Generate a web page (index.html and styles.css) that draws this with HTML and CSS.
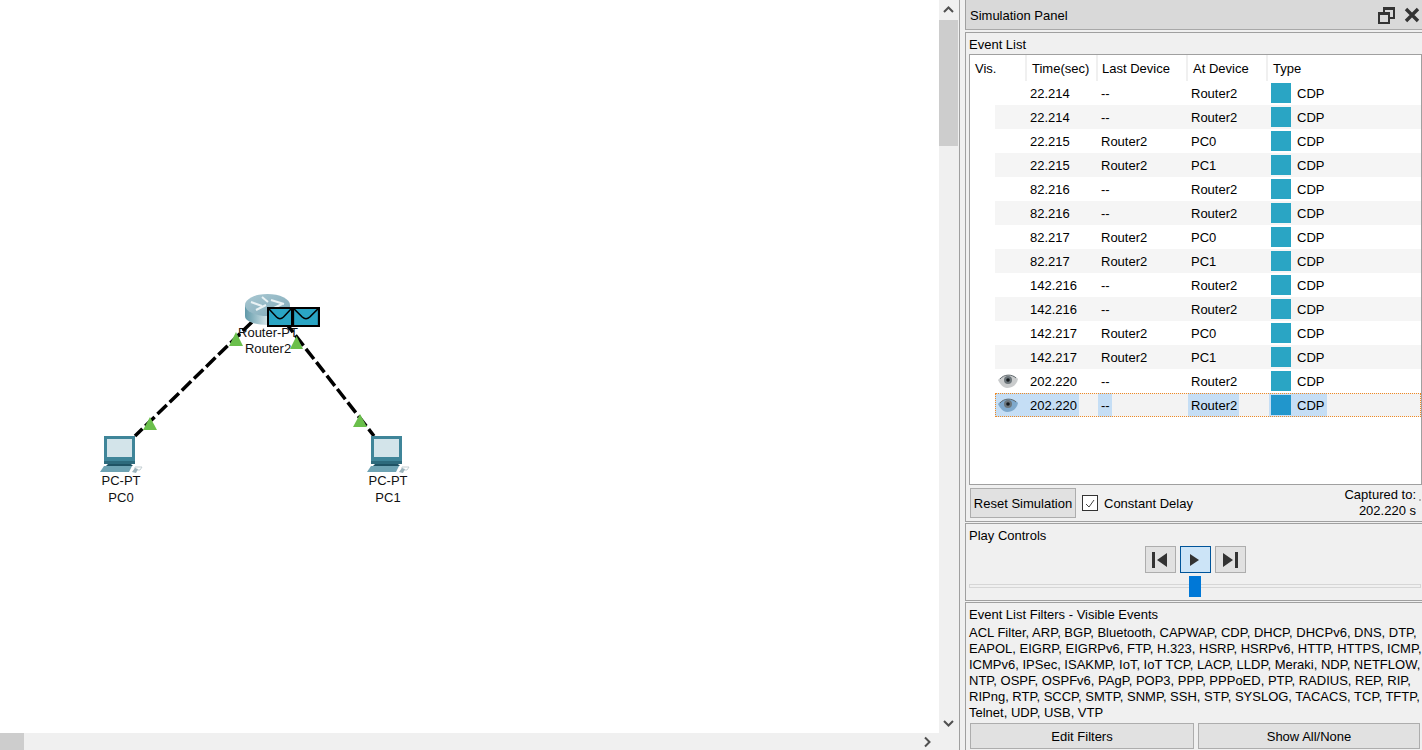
FILE: index.html
```html
<!DOCTYPE html>
<html lang="en">
<head>
    <meta charset="UTF-8">
    <meta name="viewport" content="width=device-width, initial-scale=1.0">
    <title>Simulation Panel</title>
    <link rel="stylesheet" href="styles.css">
</head>
<body>

    <svg class="defs" width="0" height="0">
        <defs>
            <linearGradient id="routerSide" x1="0" x2="1" y1="0" y2="0">
                <stop offset="0" stop-color="#5f98a8"/>
                <stop offset="0.5" stop-color="#d5e6ea"/>
                <stop offset="1" stop-color="#8eb6c2"/>
            </linearGradient>
            <linearGradient id="routerTop" x1="0" x2="1" y1="0" y2="1">
                <stop offset="0" stop-color="#a9c8d2"/>
                <stop offset="1" stop-color="#7fa9b8"/>
            </linearGradient>
            <symbol id="pc" viewBox="0 0 44 38">
                <path d="M5 1 H36 V29 H5 Z" fill="#3f8599"/>
                <path d="M8 4 H33 V22 H8 Z" fill="#d3e4ea"/>
                <path d="M5 26 H36 V29 H5 Z" fill="#2d6a7c"/>
                <path d="M9 29 H32 L34 31 H7 Z" fill="#1f5364"/>
                <path d="M5 31 H33 L30 37 H1 Z" fill="#6ea3b3"/>
                <path d="M36 32 H43 L41 35 H36 Z" fill="none" stroke="#c4cfd3"/>
                <path d="M33 37 L36 33 L39 34 L37 38 Z" fill="#9ab2ba"/>
            </symbol>
            <symbol id="eye" viewBox="0 0 20 14">
                <path d="M0 6 C4 1 15 -1 20 5 C19 10 15 14 9 14 C5 14 2 10 0 6 Z" fill="currentColor"/>
                <circle cx="10" cy="6" r="4" fill="#6d767b"/>
                <circle cx="10" cy="6" r="1.800" fill="#14191c"/>
                <path d="M2 5 C6 0 14 0 18 4" fill="none" stroke="#5f686c" stroke-width="1"/>
            </symbol>
            <symbol id="letter" viewBox="0 0 26 20" preserveAspectRatio="none">
                <rect x="1" y="1" width="24" height="18" fill="#2aa5c4" stroke="#000" stroke-width="2"/>
                <path d="M2 2 L9.500 10 Q13 13.500 16.500 10 L24 2" fill="none" stroke="#000" stroke-width="1.500"/>
            </symbol>
        </defs>
    </svg>

    <div class="workspace">
        <div class="workspace-top">
            <div class="canvas">
                <div class="node-label router-label">Router-PT<br>Router2</div>
                <div class="node-label pc0-label">PC-PT<br>PC0</div>
                <div class="node-label pc1-label">PC-PT<br>PC1</div>
                <svg class="diagram" width="939" height="733">
                    <path class="link" d="M252 322 L135 436"/>
                    <path class="link" d="M285 322 L374 436"/>
                    <polygon class="tri" points="236,332 229,346 243,346"/>
                    <polygon class="tri" points="150,417 143,430 157,430"/>
                    <polygon class="tri" points="296.500,336 290,349 303,349"/>
                    <polygon class="tri" points="360,414 353,427 367,427"/>
                    <path d="M245 305 V316 C245 328 290 328 290 316 V305 Z" fill="url(#routerSide)"/>
                    <ellipse cx="267.500" cy="305" rx="22.500" ry="11" fill="url(#routerTop)"/>
                    <path d="M251 302 L262 306 M256 310 L266 305 M271 300 L284 304 M272 309 L282 304 M262 297 L268 302" stroke="#e9f2f4" stroke-width="2" fill="none"/>
                    <use href="#pc" x="99" y="435" width="44" height="38"/>
                    <use href="#pc" x="366" y="435" width="44" height="38"/>
                </svg>
                <svg class="letter-one" width="26" height="20"><use href="#letter" width="26" height="20"/></svg>
                <svg class="letter-two" width="28" height="20"><use href="#letter" width="28" height="20"/></svg>
            </div>
            <div class="vscroll">
                <svg class="arrow" width="19" height="20" viewBox="0 0 19 20"><path d="M5 12 L9.500 7.500 L14 12"/></svg>
                <div class="vthumb"></div>
                <div class="grow"></div>
                <svg class="arrow" width="19" height="20" viewBox="0 0 19 20"><path d="M5 8 L9.500 12.500 L14 8"/></svg>
            </div>
        </div>
        <div class="hscroll">
            <div class="hthumb"></div>
            <div class="grow"></div>
            <svg class="arrow" width="19" height="17" viewBox="0 0 19 17"><path d="M5 4.500 L9.500 9 L5 13.500"/></svg>
            <div class="corner"></div>
        </div>
    </div>

    <div class="panel">
        <div class="panel-title">
            <span>Simulation Panel</span>
            <div class="title-icons">
                <svg width="18" height="18" viewBox="0 0 18 18"><path d="M7 6 V2 H17 V12 H12.500 M2 7 H12 V17 H2 Z" fill="none" stroke="#333" stroke-width="2"/><path d="M6 1 H18 V4 H6 Z M1 6 H13 V9 H1 Z" fill="#333"/></svg>
                <svg width="18" height="18" viewBox="0 0 18 18"><path d="M3 3 L15 15 M15 3 L3 15" stroke="#333" stroke-width="3.400"/></svg>
            </div>
        </div>

        <div class="group event-group">
            <div class="group-title">Event List</div>
            <div class="event-list">
                <div class="event-head">
                    <div class="col-vis">Vis.</div>
                    <div class="col-time">Time(sec)</div>
                    <div class="col-last">Last Device</div>
                    <div class="col-at">At Device</div>
                    <div class="col-type">Type</div>
                </div>
                <div class="event-row"><div class="cell-vis"></div><div class="cell-time">22.214</div><div class="cell-last">--</div><div class="cell-at">Router2</div><div class="cell-type"><i class="swatch"></i>CDP</div></div>
                <div class="event-row alt"><div class="cell-vis"></div><div class="cell-time">22.214</div><div class="cell-last">--</div><div class="cell-at">Router2</div><div class="cell-type"><i class="swatch"></i>CDP</div></div>
                <div class="event-row"><div class="cell-vis"></div><div class="cell-time">22.215</div><div class="cell-last">Router2</div><div class="cell-at">PC0</div><div class="cell-type"><i class="swatch"></i>CDP</div></div>
                <div class="event-row alt"><div class="cell-vis"></div><div class="cell-time">22.215</div><div class="cell-last">Router2</div><div class="cell-at">PC1</div><div class="cell-type"><i class="swatch"></i>CDP</div></div>
                <div class="event-row"><div class="cell-vis"></div><div class="cell-time">82.216</div><div class="cell-last">--</div><div class="cell-at">Router2</div><div class="cell-type"><i class="swatch"></i>CDP</div></div>
                <div class="event-row alt"><div class="cell-vis"></div><div class="cell-time">82.216</div><div class="cell-last">--</div><div class="cell-at">Router2</div><div class="cell-type"><i class="swatch"></i>CDP</div></div>
                <div class="event-row"><div class="cell-vis"></div><div class="cell-time">82.217</div><div class="cell-last">Router2</div><div class="cell-at">PC0</div><div class="cell-type"><i class="swatch"></i>CDP</div></div>
                <div class="event-row alt"><div class="cell-vis"></div><div class="cell-time">82.217</div><div class="cell-last">Router2</div><div class="cell-at">PC1</div><div class="cell-type"><i class="swatch"></i>CDP</div></div>
                <div class="event-row"><div class="cell-vis"></div><div class="cell-time">142.216</div><div class="cell-last">--</div><div class="cell-at">Router2</div><div class="cell-type"><i class="swatch"></i>CDP</div></div>
                <div class="event-row alt"><div class="cell-vis"></div><div class="cell-time">142.216</div><div class="cell-last">--</div><div class="cell-at">Router2</div><div class="cell-type"><i class="swatch"></i>CDP</div></div>
                <div class="event-row"><div class="cell-vis"></div><div class="cell-time">142.217</div><div class="cell-last">Router2</div><div class="cell-at">PC0</div><div class="cell-type"><i class="swatch"></i>CDP</div></div>
                <div class="event-row alt"><div class="cell-vis"></div><div class="cell-time">142.217</div><div class="cell-last">Router2</div><div class="cell-at">PC1</div><div class="cell-type"><i class="swatch"></i>CDP</div></div>
                <div class="event-row"><div class="cell-vis"><svg class="eye eye-grey" width="20" height="14"><use href="#eye"/></svg></div><div class="cell-time">202.220</div><div class="cell-last">--</div><div class="cell-at">Router2</div><div class="cell-type"><i class="swatch"></i>CDP</div></div>
                <div class="event-row alt selected"><div class="cell-vis"><svg class="eye eye-blue" width="20" height="14"><use href="#eye"/></svg></div><div class="cell-time">202.220</div><div class="cell-last"><span>--</span></div><div class="cell-at"><span>Router2</span></div><div class="cell-type"><i class="swatch"></i>CDP</div></div>
            </div>
            <div class="event-foot">
                <button class="btn reset-btn">Reset Simulation</button>
                <div class="check">
                    <svg width="10" height="9" viewBox="0 0 10 9"><path d="M1 5 L4 8 L9 1" fill="none" stroke="#444" stroke-width="1"/></svg>
                </div>
                <span>Constant Delay</span>
                <div class="captured">Captured to:<br>202.220 s</div>
                <i class="grip"></i>
            </div>
        </div>

        <div class="group play-group">
            <div class="group-title">Play Controls</div>
            <div class="play-buttons">
                <button class="play-btn"><svg width="18" height="16" viewBox="0 0 18 16"><path d="M1 0 H4 V16 H1 Z M16 1 V15 L6 8 Z"/></svg></button>
                <button class="play-btn active"><svg width="18" height="16" viewBox="0 0 18 16"><path d="M4 2 L13 8 L4 14 Z"/></svg></button>
                <button class="play-btn"><svg width="18" height="16" viewBox="0 0 18 16"><path d="M2 1 L12 8 L2 15 Z M14 0 H17 V16 H14 Z"/></svg></button>
            </div>
            <div class="slider"><div class="slider-track"></div><div class="slider-thumb"></div></div>
        </div>

        <div class="group filter-group">
            <div class="group-title">Event List Filters - Visible Events</div>
            <div class="filter-text">ACL Filter, ARP, BGP, Bluetooth, CAPWAP, CDP, DHCP, DHCPv6, DNS, DTP,<br>EAPOL, EIGRP, EIGRPv6, FTP, H.323, HSRP, HSRPv6, HTTP, HTTPS, ICMP,<br>ICMPv6, IPSec, ISAKMP, IoT, IoT TCP, LACP, LLDP, Meraki, NDP, NETFLOW,<br>NTP, OSPF, OSPFv6, PAgP, POP3, PPP, PPPoED, PTP, RADIUS, REP, RIP,<br>RIPng, RTP, SCCP, SMTP, SNMP, SSH, STP, SYSLOG, TACACS, TCP, TFTP,<br>Telnet, UDP, USB, VTP</div>
            <div class="filter-buttons">
                <button class="btn edit-btn">Edit Filters</button>
                <button class="btn show-btn">Show All/None</button>
            </div>
        </div>
    </div>

</body>
</html>
```

FILE: styles.css
```css
* {
    box-sizing: border-box;
}
html, body {
    height: 100%;
}
body {
    font-family: "Liberation Sans", Arial, sans-serif;
    font-size: 13px;
    line-height: 15px;
    color: #000;
    display: flex;
    margin: 0;
    height: 750px;
    overflow: hidden;
    background-color: #f0f0f0;
}
.defs {
    position: absolute;
}
.grow {
    flex: 1;
}

/* left side */
.workspace {
    width: 960px;
    flex-shrink: 0;
    display: flex;
    flex-direction: column;
    border-right: 1px solid #a0a0a0;
}
.workspace-top {
    flex: 1;
    display: flex;
}
.canvas {
    position: relative;
    width: 939px;
    background-color: #fff;
}
.diagram {
    position: absolute;
    left: 0;
    top: 0;
}
.link {
    stroke: #000;
    stroke-width: 3.500;
    stroke-dasharray: 13 4;
    fill: none;
}
.tri {
    fill: #6abf4b;
}
.node-label {
    position: absolute;
    width: 80px;
    text-align: center;
    line-height: 17px;
    color: #111;
}
.router-label {
    left: 228px;
    top: 325px;
    line-height: 15.500px;
}
.pc0-label {
    left: 81px;
    top: 472px;
}
.pc1-label {
    left: 348px;
    top: 472px;
}
.letter-one {
    position: absolute;
    left: 267px;
    top: 307px;
}
.letter-two {
    position: absolute;
    left: 292px;
    top: 307px;
}
.vscroll {
    width: 20px;
    display: flex;
    flex-direction: column;
    background-color: #f0f0f0;
}
.vthumb {
    width: 19px;
    height: 126px;
    background-color: #cdcdcd;
}
.arrow {
    flex-shrink: 0;
}
.arrow path {
    fill: none;
    stroke: #505050;
    stroke-width: 2;
}
.hscroll {
    height: 17px;
    flex-shrink: 0;
    display: flex;
    background-color: #f0f0f0;
}
.hthumb {
    width: 24px;
    background-color: #cdcdcd;
}
.corner {
    width: 20px;
}

/* right panel */
.panel {
    width: 462px;
    padding-left: 5px;
    display: flex;
    flex-direction: column;
}
.panel-title {
    height: 30px;
    flex-shrink: 0;
    padding: 1px 1px 0 4px;
    display: flex;
    align-items: center;
    justify-content: space-between;
    background-color: #d9d9d9;
    border-left: 1px solid #a0a0a0;
    border-bottom: 1px solid #a8a8a8;
}
.title-icons {
    display: flex;
    gap: 8px;
}
.group {
    flex-shrink: 0;
    border-top: 1px solid #a0a0a0;
    border-left: 1px solid #a0a0a0;
    margin-top: 1px;
}
.group-title {
    padding-left: 3px;
}
.event-group {
    height: 490px;
    margin-top: 2px;
    padding-top: 4px;
    border-bottom: 1px solid #a0a0a0;
}
.event-list {
    height: 431px;
    margin: 2px 0 0 3px;
    border: 1px solid #a0a0a0;
    background-color: #fff;
}
.event-head {
    display: flex;
    height: 26px;
    align-items: stretch;
}
.event-head > div {
    padding: 6px 0 0 5px;
    border-right: 2px solid #f0f0f0;
}
.col-vis { width: 57px; }
.col-time { width: 71px; }
.col-last { width: 90px; padding-left: 4px !important; }
.col-at { width: 80px; }
.col-type { flex: 1; border-right: 0 !important; }
.event-row {
    display: flex;
    height: 24px;
    line-height: 26px;
}
.event-row.alt {
    background: linear-gradient(to right, #fff 25px, #f5f5f5 25px);
}
.event-row > .cell-vis {
    width: 56px;
    flex-shrink: 0;
    padding: 0 0 0 28px;
}
.cell-time { width: 71px; padding-left: 4px; }
.cell-last { width: 90px; padding-left: 4px; }
.cell-at { width: 80px; padding-left: 4px; }
.cell-type {
    display: flex;
    align-items: flex-start;
    gap: 6px;
}
.swatch {
    width: 20px;
    height: 20px;
    margin: 2px 0 0 4px;
    background-color: #2aa5c4;
}
.eye {
    display: block;
    margin-top: 5px;
}
.eye-grey { color: #c9cbcc; }
.eye-blue { color: #7fa9cc; }

.selected {
    outline: 1px dotted #f08a24;
    outline-offset: -1px;
    margin-left: 25px;
}
.event-row.selected {
    background: #f3f3f3;
}
.selected > .cell-vis {
    width: 31px !important;
    padding-left: 3px !important;
    background-color: #c5def5;
}
.selected .cell-time {
    width: 53px;
    background-color: #c5def5;
    margin-right: 18px;
    padding-left: 4px;
}
.selected .cell-last {
    padding-left: 1px;
}
.selected .cell-last span {
    display: block;
    width: 14px;
    height: 24px;
    padding-left: 3px;
    background-color: #c5def5;
}
.selected .cell-at {
    padding-left: 1px;
}
.selected .cell-at span {
    display: block;
    width: 51px;
    height: 24px;
    padding-left: 3px;
    background-color: #c5def5;
}
.selected .cell-type {
    width: 58px;
    margin-left: 2px;
    background-color: #c5def5;
    flex: none;
}
.selected .swatch {
    margin-left: 2px;
    background-color: #2196cc;
}

.event-foot {
    display: flex;
    align-items: center;
    height: 36px;
    padding: 0 1px 0 4px;
}
.btn {
    font-family: inherit;
    font-size: 13px;
    color: #000;
    background-color: #e1e1e1;
    border: 1px solid #adadad;
    padding: 0;
}
.reset-btn {
    width: 106px;
    height: 30px;
}
.check {
    width: 16px;
    height: 16px;
    margin: 0 6px;
    display: flex;
    align-items: center;
    justify-content: center;
    border: 1px solid #333;
    background-color: #fff;
}
.captured {
    margin-left: auto;
    padding-right: 3px;
    text-align: right;
    line-height: 16px;
}
.grip {
    width: 2px;
    height: 2px;
    margin-bottom: 6px;
    background-color: #b5b5b5;
}
.play-group {
    height: 78px;
    padding-top: 4px;
    border-bottom: 1px solid #a0a0a0;
}
.play-buttons {
    display: flex;
    gap: 4px;
    justify-content: center;
    padding-left: 2px;
    margin-top: 3px;
}
.play-btn {
    width: 31px;
    height: 27px;
    padding: 0;
    display: flex;
    align-items: center;
    justify-content: center;
    background-color: #e1e1e1;
    border: 1px solid #adadad;
}
.play-btn svg {
    fill: #333;
}
.play-btn.active {
    background-color: #cce4f7;
    border-color: #005499;
}
.slider {
    position: relative;
    height: 24px;
    margin: 3px 0 0 3px;
}
.slider-track {
    position: absolute;
    left: 0;
    right: 1px;
    top: 8px;
    height: 4px;
    background-color: #f0f0f0;
    border: 1px solid #d6d6d6;
}
.slider-thumb {
    position: absolute;
    left: 220px;
    top: 0;
    width: 12px;
    height: 21px;
    background-color: #0078d7;
}
.filter-group {
    flex: 1;
    padding-top: 4px;
}
.filter-text {
    padding: 3px 0 0 3px;
    line-height: 16px;
    white-space: nowrap;
}
.filter-buttons {
    display: flex;
    gap: 4px;
    padding: 2px 0 0 4px;
}
.filter-buttons .btn {
    height: 26px;
}
.edit-btn {
    width: 224px;
}
.show-btn {
    width: 222px;
}
```
